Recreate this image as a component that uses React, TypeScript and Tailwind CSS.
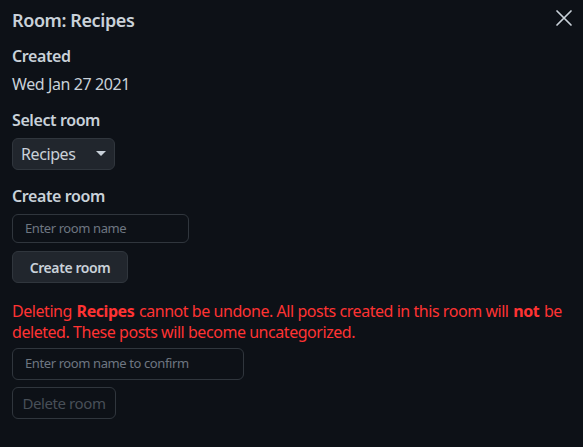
import React from "react";

export default function App() {
  return (
    <div
      className="w-[583px] h-[447px] bg-[#0d1117] text-[#c9d1d9] relative overflow-hidden tracking-[-0.4px]"
      style={{ fontFamily: '"Noto Sans", "Open Sans", sans-serif' }}
    >
      <div className="px-3 pt-[8px]">
        <div className="flex items-center justify-between h-[24px]">
          <h1 className="text-[18px] font-semibold leading-[24px] text-[#c9d1d9]">Room: Recipes</h1>
          <svg width="18" height="18" viewBox="0 0 18 18" className="mr-[-2px] mt-[-4px]" stroke="#c9d1d9" strokeWidth="1.7" strokeLinecap="round">
            <path d="M2 2 L16 16 M16 2 L2 16" />
          </svg>
        </div>
        <div className="mt-[13px] text-[16px] font-semibold leading-[22px]">Created</div>
        <div className="mt-[6px] text-[16px] leading-[22px]">Wed Jan 27 2021</div>
        <div className="mt-[14px] text-[16px] font-semibold leading-[22px]">Select room</div>
        <div className="mt-[7px] w-[103px] h-[32px] rounded-[6px] bg-[#21262d] border border-[#30363d] flex items-center justify-between pl-[8px] pr-[8px]">
          <span className="text-[16px] leading-[20px] text-[#c9d1d9]">Recipes</span>
          <svg width="10" height="6" viewBox="0 0 10 6"><path d="M0 0 L10 0 L5 5 Z" fill="#c9d1d9" /></svg>
        </div>
        <div className="mt-[15px] text-[16px] font-semibold leading-[22px]">Create room</div>
        <div className="mt-[7px] w-[177px] h-[29px] rounded-[6px] border border-[#30363d] flex items-center pl-[12px]">
          <span className="text-[13px] text-[#6e7681]">Enter room name</span>
        </div>
        <div className="mt-[8px] w-[116px] h-[32px] rounded-[6px] bg-[#21262d] border border-[#30363d] flex items-center justify-center">
          <span className="text-[14px] font-semibold text-[#c9d1d9]">Create room</span>
        </div>
        <p className="mt-[18px] text-[16px] leading-[21px] text-[#f33] tracking-[-0.45px]">
          Deleting <b className="font-bold px-[1px]">Recipes</b> cannot be undone. All posts created in this room will <b className="font-bold px-[1px]">not</b> be deleted. These posts will become uncategorized.
        </p>
        <div className="mt-[5px] w-[232px] h-[32px] rounded-[6px] border border-[#30363d] flex items-center pl-[12px]">
          <span className="text-[13px] text-[#6e7681]">Enter room name to confirm</span>
        </div>
        <div className="mt-[7px] w-[104px] h-[32px] rounded-[6px] border border-[#30363d] flex items-center justify-center">
          <span className="text-[15px] text-[#484f58]">Delete room</span>
        </div>
      </div>
    </div>
  );
}
